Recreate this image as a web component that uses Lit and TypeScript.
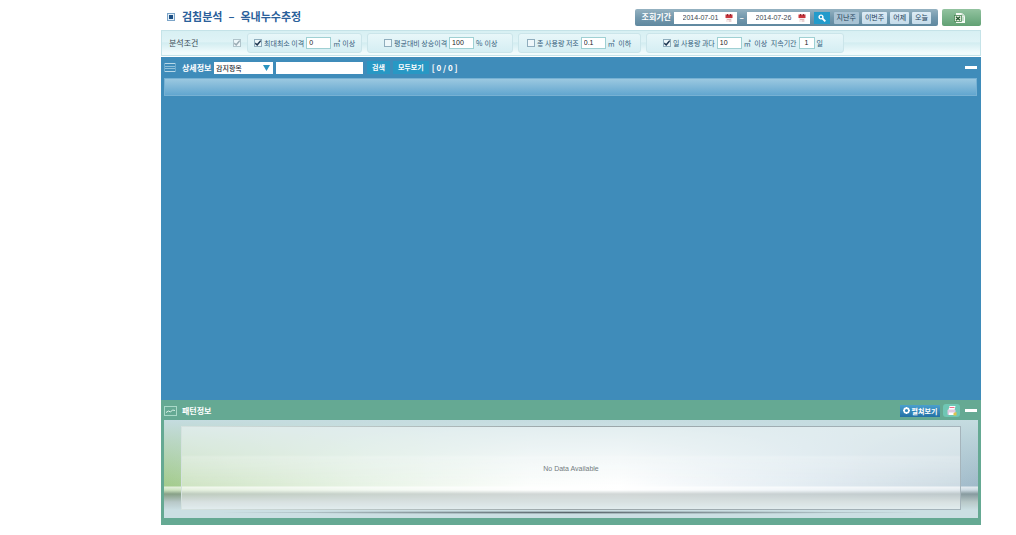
import { LitElement, html, css, svg } from "lit";
import { customElement, property, state } from "lit/decorators.js";

const calendarIcon = html`<svg width="8" height="8" viewBox="0 0 8 8" aria-hidden="true">
  <rect x="1" y="3" width="6" height="5" fill="#f6ebeb" />
  <rect x="0.500" y="0.500" width="7" height="3.500" fill="#c9353c" />
  <path d="M2.500 0v2M5.500 0v2" stroke="#8f2a2f" />
  <path d="M2 5.500h4M4 7h2" stroke="#d3a0a4" stroke-width=".7" />
</svg>`;

interface Part {
  kind: "text" | "input";
  value: string;
  narrow?: boolean;
}

interface Condition {
  id: string;
  label: string;
  checked: boolean;
  parts: Part[];
}

const CONDITIONS: Condition[] = [
  {
    id: "gap",
    label: "최대최소 이격",
    checked: true,
    parts: [
      { kind: "input", value: "0" },
      { kind: "text", value: "㎥" },
      { kind: "text", value: "이상" },
    ],
  },
  {
    id: "rise",
    label: "평균대비 상승이격",
    checked: false,
    parts: [
      { kind: "input", value: "100" },
      { kind: "text", value: "%" },
      { kind: "text", value: "이상" },
    ],
  },
  {
    id: "low",
    label: "총 사용량 저조",
    checked: false,
    parts: [
      { kind: "input", value: "0.1" },
      { kind: "text", value: "㎥" },
      { kind: "text", value: " 이하" },
    ],
  },
  {
    id: "high",
    label: "일 사용량 과다",
    checked: true,
    parts: [
      { kind: "input", value: "10" },
      { kind: "text", value: "㎥" },
      { kind: "text", value: " 이상" },
      { kind: "text", value: " 지속기간" },
      { kind: "input", value: "1", narrow: true },
      { kind: "text", value: "일" },
    ],
  },
];

const shared = css`
  * {
    box-sizing: border-box;
  }
  button,
  input,
  select {
    font: inherit;
    margin: 0;
    padding: 0;
    border: 0;
    border-radius: 0;
    color: inherit;
  }
  svg {
    display: block;
    flex: none;
  }
`;

@customElement("period-bar")
export class PeriodBar extends LitElement {
  static styles = [
    shared,
    css`
      :host {
        display: flex;
        gap: 4px;
      }
      .bar {
        display: flex;
        align-items: center;
        height: 17px;
        padding: 0 7px;
        border-radius: 2px;
        background: linear-gradient(#95b2c1, #7398ad 50%, #5f889f);
        color: #fff;
      }
      .title {
        font-weight: 700;
        width: 32px;
        line-height: 10px;
        padding-bottom: 1px;
      }
      .date {
        display: flex;
        align-items: center;
        width: 63px;
        height: 12px;
        padding: 0 4px 0 9px;
        background: #fff;
        color: #3d4650;
      }
      .date input {
        flex: 1;
        min-width: 0;
        height: 12px;
        font-family: "Liberation Sans", sans-serif;
        font-size: 7px;
        background: none;
      }
      .dash {
        width: 10px;
        text-align: center;
        font-weight: 700;
      }
      .search {
        display: grid;
        place-items: center;
        width: 16px;
        height: 12px;
        margin: 0 4px;
        background: #229bcb;
      }
      .quick {
        display: flex;
        gap: 3px;
      }
      .quick button {
        height: 12px;
        padding: 0 3px 1px;
        border-radius: 1px;
        background: linear-gradient(#dcebf5, #c6dcea);
        color: #23405a;
        font-size: 7px;
        line-height: 10px;
      }
      .quick .active {
        background: #a9c3d4;
      }
      .excel {
        display: grid;
        place-items: center;
        width: 39px;
        height: 17px;
        padding-right: 4px;
        border-radius: 2px;
        background: linear-gradient(#93c3a0, #79b28a 50%, #62a174);
      }
    `,
  ];

  render() {
    return html`
      <div class="bar">
        <span class="title">조회기간</span>
        <span class="date">
          <input aria-label="시작일" .value=${"2014-07-01"} />${calendarIcon}
        </span>
        <span class="dash">–</span>
        <span class="date">
          <input aria-label="종료일" .value=${"2014-07-26"} />${calendarIcon}
        </span>
        <button class="search" aria-label="조회">
          <svg width="8" height="8" viewBox="0 0 8 8">
            <circle cx="3" cy="3" r="1.900" fill="none" stroke="#fff" stroke-width="1.400" />
            <path d="M4.500 4.500 7.300 7.300" stroke="#fff" stroke-width="1.800" />
          </svg>
        </button>
        <div class="quick">
          <button class="active">지난주</button>
          <button>이번주</button>
          <button>어제</button>
          <button>오늘</button>
        </div>
      </div>
      <button class="excel" aria-label="엑셀">
        <svg width="11" height="10" viewBox="0 0 11 10">
          <path d="M2 0h6l3 3v7H2z" fill="#f6fbf5" />
          <path d="M8 0v3h3" fill="#d4e3d6" stroke="#a1c3aa" stroke-width=".5" />
          <path d="M8 5h2M8 7h2" stroke="#7eb58d" stroke-width=".8" />
          <rect x=".5" y="2.500" width="7" height="6" fill="#e5f0df" stroke="#4c8958" stroke-width=".8" />
          <path d="m2 3.800 4 3.400m0-3.400-4 3.400" stroke="#24552f" stroke-width="1.300" />
        </svg>
      </button>
    `;
  }
}

@customElement("condition-bar")
export class ConditionBar extends LitElement {
  static styles = [
    shared,
    css`
      :host {
        display: flex;
        align-items: center;
        height: 26px;
        border: 1px solid #c5e3e8;
        background: linear-gradient(#d8f0f3, #dff3f6 44%, #d3edf1 50%, #f1fbfc 90%);
        font-size: 7px;
        color: #35607c;
      }
      .head {
        display: flex;
        align-items: center;
        justify-content: space-between;
        width: 85px;
        padding: 0 6px 0 7px;
        font-size: 8px;
        color: #3b4a55;
      }
      .groups {
        display: flex;
        gap: 5px;
      }
      .group {
        display: flex;
        align-items: center;
        height: 20px;
        border: 1px solid #cbe5ea;
        border-radius: 3px;
        background: linear-gradient(#e8f7f9, #d5eef3);
        white-space: pre;
      }
      .gap {
        width: 115px;
        padding-left: 6px;
      }
      .rise {
        width: 146px;
        padding-left: 16px;
      }
      .low {
        width: 123px;
        padding-left: 8px;
      }
      .high {
        width: 198px;
        padding-left: 16px;
      }
      .check {
        display: flex;
        align-items: center;
        gap: 2px;
      }
      .check input,
      .all {
        appearance: none;
        display: grid;
        width: 8px;
        height: 8px;
        border: 1px solid #8fadbd;
        background: #eef7fa;
      }
      .all {
        border-color: #b0c4cb;
        --tick: #9aabb3;
      }
      .check input:checked::before,
      .all:checked::before {
        content: "";
        background: var(--tick, #1c3550);
        clip-path: polygon(5% 40%, 35% 62%, 90% 0, 100% 25%, 38% 100%, 0 65%);
      }
      .value {
        width: 25px;
        height: 12px;
        margin: 0 2px;
        padding-left: 2px;
        border: 1px solid #9fd0d3;
        background: #fff;
        color: #222;
        font-family: "Liberation Sans", sans-serif;
        font-size: 7px;
      }
      .narrow {
        width: 16px;
        padding: 0;
        text-align: center;
      }
      .unit + .unit {
        margin-left: 2px;
      }
    `,
  ];

  @property({ attribute: false }) conditions: Condition[] = [];

  render() {
    return html`
      <div class="head">
        <span>분석조건</span>
        <input class="all" type="checkbox" aria-label="전체 선택" checked />
      </div>
      <div class="groups">
        ${this.conditions.map(
          (c) => html`<div class="group ${c.id}">
            <label class="check"
              ><input type="checkbox" .checked=${c.checked} />${c.label}</label
            >${c.parts.map((p) =>
              p.kind === "input"
                ? html`<input
                    class="value ${p.narrow ? "narrow" : ""}"
                    aria-label=${c.label}
                    .value=${p.value}
                  />`
                : html`<span class="unit">${p.value}</span>`
            )}
          </div>`
        )}
      </div>
    `;
  }
}

@customElement("detail-panel")
export class DetailPanel extends LitElement {
  static styles = [
    shared,
    css`
      :host {
        display: flex;
        flex-direction: column;
        background: #3f8cba;
        padding: 0 3px;
        color: #fff;
      }
      .head {
        display: flex;
        align-items: center;
        height: 21px;
        font-weight: 700;
      }
      h2 {
        margin: 0 4px 0 6px;
        font-size: 8px;
        width: 28px;
        white-space: nowrap;
      }
      .pick {
        display: grid;
        align-items: center;
        width: 59px;
        height: 12px;
        background: #fff;
        color: #1d2a33;
        font-size: 7px;
        font-weight: 500;
      }
      .pick select {
        grid-area: 1 / 1;
        appearance: none;
        width: 100%;
        height: 12px;
        padding-left: 2px;
        background: none;
      }
      .pick svg {
        grid-area: 1 / 1;
        justify-self: end;
        margin-right: 3px;
        pointer-events: none;
      }
      .query {
        width: 87px;
        height: 12px;
        margin: 0 4px 0 3px;
        background: #fff;
        color: #222;
      }
      .btn {
        height: 13px;
        padding: 0 5px;
        margin-right: 3px;
        background: #2898c4;
        font-size: 7px;
        line-height: 13px;
        white-space: nowrap;
      }
      .count {
        font-size: 8px;
        white-space: pre;
      }
      .fold {
        width: 12px;
        height: 3px;
        margin: 0 1px 0 auto;
        background: #fff;
      }
      .columns {
        height: 18px;
        margin-right: 1px;
        border: 1px solid #77b1d3;
        background: linear-gradient(#9bc8e0, #62a6cf);
      }
    `,
  ];

  render() {
    return html`
      <div class="head">
        <svg width="12" height="9" viewBox="0 0 12 9" aria-hidden="true">
          <path d="M0 .5h12M0 8.500h12" stroke="#b8d8e8" />
          <path d="M0 3.500h12M0 5.500h12" stroke="#8fc0da" />
          <path d="M.5 0v9M11.500 0v9" stroke="#6fabcd" />
        </svg>
        <h2>상세정보</h2>
        <span class="pick">
          <select aria-label="검색 항목">
            <option>감지항목</option>
          </select>
          <svg width="7" height="6" viewBox="0 0 7 6"><path d="M0 0h7L3.500 6z" fill="#2b93bf" /></svg>
        </span>
        <input class="query" aria-label="검색어" />
        <button class="btn">검색</button>
        <button class="btn">모두보기</button>
        <span class="count">[ 0 / 0 ]</span>
        <button class="fold" aria-label="접기"></button>
      </div>
      <div class="columns"></div>
    `;
  }
}

@customElement("pattern-panel")
export class PatternPanel extends LitElement {
  static styles = [
    shared,
    css`
      :host {
        display: block;
        padding: 0 3px 7px;
        background: #65a993;
        color: #fff;
      }
      .head {
        display: flex;
        align-items: center;
        height: 20px;
        padding: 1px 1px 0 0;
        font-weight: 700;
      }
      h2 {
        margin: 0 auto 0 5px;
        font-size: 8px;
      }
      .expand {
        display: flex;
        align-items: center;
        justify-content: center;
        gap: 2px;
        width: 40px;
        height: 12px;
        margin-right: 3px;
        background: linear-gradient(#4a9fcd, #2471a5);
        font-size: 7px;
        line-height: 12px;
        white-space: nowrap;
      }
      .print {
        display: grid;
        place-items: center;
        width: 17px;
        height: 13px;
        margin-right: 5px;
        border-radius: 3px;
        background: #6fc6b4;
      }
      .fold {
        width: 12px;
        height: 3px;
        background: #fff;
      }
      .stage {
        height: 98px;
        padding: 6px 17px 8px;
        background:
          radial-gradient(closest-side, #59666c, #59666c00) 50% 91px / 86% 3px no-repeat,
          linear-gradient(
            transparent 66px,
            #ffffffb0 67px,
            #ffffff70 70px,
            #74848299 74px,
            #b8c8c8 82px,
            #cbdfe3 90px
          ),
          linear-gradient(#c5dce0 0, #c5dce0aa 20px, transparent 66px),
          linear-gradient(90deg, #a3cb8c, #d6ebd2 25%, #fafdfa 45%, #fff 56%, #cfdfea 78%, #a0bac9);
      }
      .chart {
        display: grid;
        place-items: center;
        height: 84px;
        border: 1px solid;
        border-image: linear-gradient(90deg, #d5e2df, #9aa5a8 50%, #a5b4bb) 1;
        background:
          linear-gradient(#ffffff00 28px, #ffffff30 30px, #ffffff00 58px),
          linear-gradient(#ffffff73, #ffffff73);
        color: #737b80;
        font: 7px "Liberation Sans", sans-serif;
      }
    `,
  ];

  render() {
    return html`
      <div class="head">
        <svg width="13" height="10" viewBox="0 0 13 10" aria-hidden="true">
          <rect x=".5" y=".5" width="12" height="9" fill="none" stroke="#a9d9c8" />
          <path d="M2 6.500 4.500 5l2 1 2-2 2.500.5" fill="none" stroke="#d9f2e8" />
        </svg>
        <h2>패턴정보</h2>
        <button class="expand">
          <svg width="7" height="7" viewBox="0 0 7 7">
            <circle cx="3.500" cy="3.500" r="2.400" fill="none" stroke="#fff" stroke-width="1.600" />
            <path d="M3.500 0v1M3.500 6v1M0 3.500h1M6 3.500h1" stroke="#fff" /></svg
          >펼쳐보기
        </button>
        <button class="print" aria-label="인쇄">
          <svg width="10" height="10" viewBox="0 0 10 10">
            <path d="M2.500 0h6L7.500 4h-6z" fill="#fff" />
            <path d="M2.500 1.500h5" stroke="#ec6f8c" />
            <rect x=".5" y="3.500" width="8" height="5.500" rx="1" fill="#e0c9e2" />
            <path d="M2 6.500h5v2.500H2z" fill="#fff" />
            <path d="m6.500 7 3-1v3.500h-3z" fill="#e0c34c" />
          </svg>
        </button>
        <button class="fold" aria-label="접기"></button>
      </div>
      <div class="stage"><div class="chart">No Data Available</div></div>
    `;
  }
}

@customElement("app-root")
export class AppRoot extends LitElement {
  static styles = [
    shared,
    css`
      :host {
        display: flex;
        flex-direction: column;
        box-sizing: border-box;
        min-height: 100vh;
        padding: 9px 35px 10px 161px;
        background: #fff;
        font-family: "Noto Sans CJK KR", sans-serif;
        font-size: 8px;
        line-height: 12px;
      }
      header {
        display: flex;
        align-items: center;
        height: 17px;
        margin-bottom: 4px;
      }
      h1 {
        display: flex;
        gap: 6px;
        margin: 0 auto 0 7px;
        padding-bottom: 3px;
        font-size: 11px;
        font-weight: 700;
        line-height: 14px;
        color: #2a609a;
        white-space: nowrap;
      }
      header > svg {
        margin: 0 0 2px 6px;
      }
      detail-panel {
        flex: 1;
        margin-top: 1px;
      }
    `,
  ];

  @state() private conditions = CONDITIONS;

  render() {
    return html`
      <header>
        <svg width="8" height="8" viewBox="0 0 8 8" aria-hidden="true">
          ${svg`<rect x=".5" y=".5" width="7" height="7" fill="#e4f0f8" stroke="#7ba4c8" />
          <rect x="2" y="2" width="4" height="4" fill="#1c4f85" />`}
        </svg>
        <h1><span>검침분석</span><span>–</span><span>옥내누수추정</span></h1>
        <period-bar></period-bar>
      </header>
      <condition-bar .conditions=${this.conditions}></condition-bar>
      <detail-panel></detail-panel>
      <pattern-panel></pattern-panel>
    `;
  }
}
